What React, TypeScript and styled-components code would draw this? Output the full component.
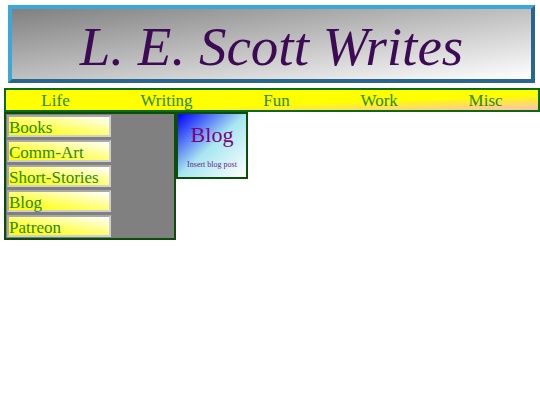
import { createGlobalStyle } from "styled-components";
import styled from "styled-components";

const GlobalStyle = createGlobalStyle`
	html, body {
		margin: 0;
		padding: 0;
		background: #ffffff;
		font-family: "Liberation Serif", "Times New Roman", serif;
	}
`;

const Page = styled.div`
	width: 536px;
	padding: 5px 0 0 4px;
`;

const Banner = styled.header`
	box-sizing: border-box;
	height: 78px;
	margin: 0 5px 0 4px;
	border: 4px solid;
	border-color: #3aa9da #27678e #27678e #3aa9da;
	background: linear-gradient(to bottom right, #808080, #ffffff);
	display: flex;
	align-items: center;
	justify-content: center;
`;

const Title = styled.h1`
	margin: 0;
	font-family: "Liberation Serif", "Times New Roman", serif;
	font-style: italic;
	font-weight: normal;
	font-size: 55px;
	color: #3d0b55;
	line-height: 1;
	padding-top: 4px;
`;

const NavBar = styled.nav`
	box-sizing: border-box;
	height: 24px;
	margin-top: 5px;
	border: 2px solid #0a6b0a;
	background: linear-gradient(to bottom right, #ffff00 62%, #ffbfb8);
	display: flex;
	justify-content: space-around;
	align-items: center;
`;

const NavLink = styled.a`
	color: #2a8a1a;
	font-size: 17px;
	line-height: 20px;
	padding-top: 1px;
	text-decoration: none;
`;

const Body = styled.div`
	display: flex;
	align-items: flex-start;
`;

const SideBar = styled.aside`
	box-sizing: border-box;
	width: 172px;
	padding: 1px 0 1px 1px;
	border: 2px solid #0b4d0b;
	background: #808080;
	display: flex;
	flex-direction: column;
	gap: 3px;
`;

const SideButton = styled.a`
	box-sizing: border-box;
	display: block;
	width: 104px;
	height: 22px;
	border: 2px solid;
	border-color: #a8a8a8 #d0d0d0 #d0d0d0 #a8a8a8;
	background: linear-gradient(to top right, #ffff00 10%, #ffffff);
	color: #2a8a1a;
	font-size: 17px;
	line-height: 21px;
	text-decoration: none;
	white-space: nowrap;
	overflow: visible;
`;

const PostCard = styled.section`
	box-sizing: border-box;
	width: 72px;
	height: 67px;
	border: 2px solid #0b4d0b;
	background: linear-gradient(to bottom right, #0000ff, #a8e6f0 50%, #ffffff);
	display: flex;
	flex-direction: column;
	align-items: center;
	text-align: center;
`;

const PostTitle = styled.h2`
	margin: 9px 0 0;
	font-weight: normal;
	font-size: 22px;
	line-height: 24px;
	color: #800080;
`;

const PostText = styled.p`
	margin: 13px 0 0;
	font-size: 8px;
	line-height: 9px;
	color: #6a1a8a;
`;

const navItems = ["Life", "Writing", "Fun", "Work", "Misc"];
const sideItems = ["Books", "Comm-Art", "Short-Stories", "Blog", "Patreon"];

export default function App() {
	return (
		<>
			<GlobalStyle />
			<Page>
				<Banner>
					<Title>L. E. Scott Writes</Title>
				</Banner>
				<NavBar>
					{navItems.map((item) => (
						<NavLink key={item} href="#">{item}</NavLink>
					))}
				</NavBar>
				<Body>
					<SideBar>
						{sideItems.map((item) => (
							<SideButton key={item} href="#">{item}</SideButton>
						))}
					</SideBar>
					<PostCard>
						<PostTitle>Blog</PostTitle>
						<PostText>Insert blog post</PostText>
					</PostCard>
				</Body>
			</Page>
		</>
	);
}
